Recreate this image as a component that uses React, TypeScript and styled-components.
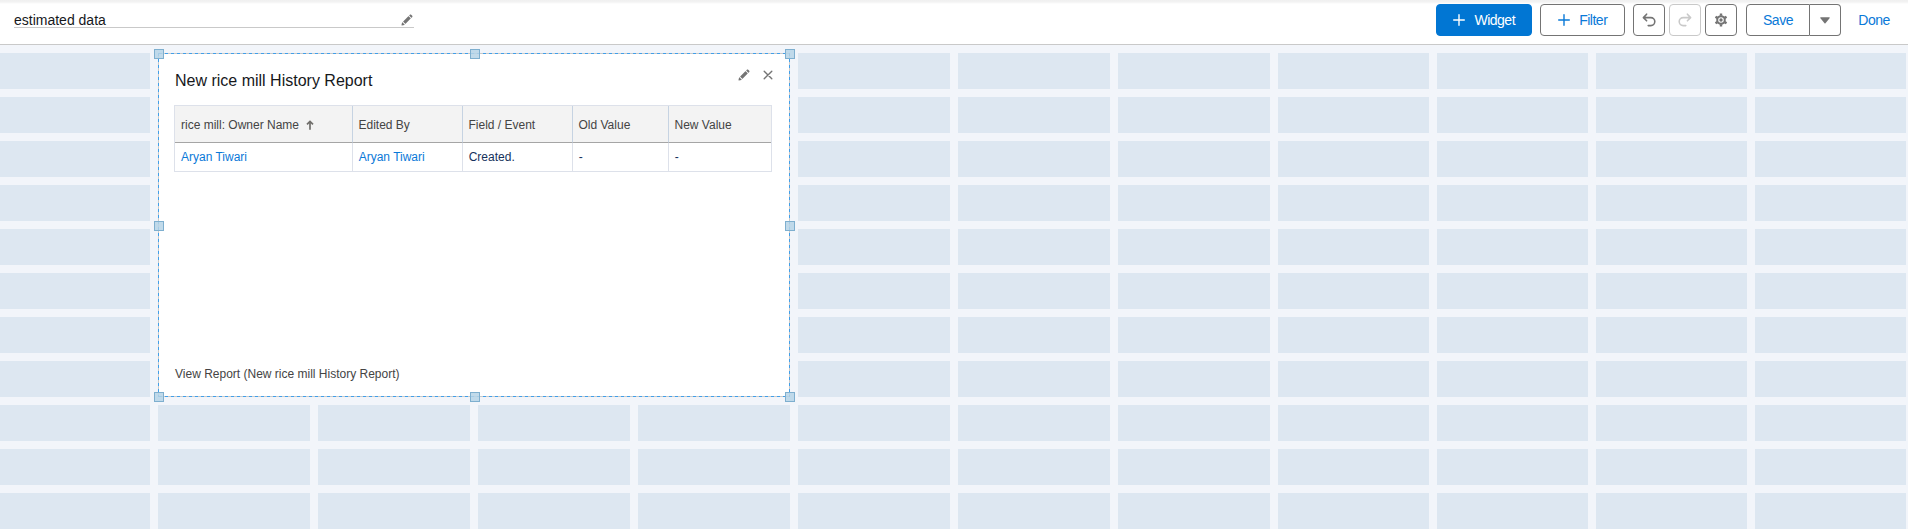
import React from "react";
import styled, { createGlobalStyle, css } from "styled-components";

const Global = createGlobalStyle`
  * { box-sizing: border-box; }
  body { margin: 0; background: #f2f5fa; overflow: hidden; font-family: "Liberation Sans", Arial, sans-serif; color: #16181b; }
  button { font: inherit; margin: 0; cursor: pointer; }
`;

const Page = styled.div`
  height: 529px;
  overflow: hidden;
  display: flex;
  flex-direction: column;
`;

const Toolbar = styled.header`
  height: 45px;
  flex: none;
  display: flex;
  justify-content: space-between;
  align-items: flex-start;
  padding: 4px 10px 0 14px;
  background: linear-gradient(#f0f0f0 0, #f3f3f3 2px, #fff 4px);
  border-bottom: 1px solid #c9c9c9;
`;

const NameField = styled.div`
  width: 400px;
  height: 24px;
  display: flex;
  justify-content: space-between;
  align-items: flex-start;
  padding: 7px 1px 0 0;
  border-bottom: 1px solid #c9c9c9;
  font-size: 14px;
  line-height: 18px;
  svg { margin-top: 3px; }
`;

const Actions = styled.div`
  display: flex;
`;

const Button = styled.button<{ $kind?: "brand" | "plain"; $w: number; $gap?: number; $off?: boolean }>`
  width: ${(p) => p.$w}px;
  height: 32px;
  margin-left: ${(p) => p.$gap ?? 0}px;
  padding: 0;
  display: flex;
  align-items: center;
  justify-content: center;
  gap: 9.5px;
  border: 1px solid ${(p) => (p.$off ? "#c9c9c9" : "#747474")};
  border-radius: 4px;
  background: #fff;
  color: #0a79d8;
  font-size: 14px;
  letter-spacing: -0.5px;
  line-height: 30px;
  ${(p) => p.$kind === "brand" && css`background: #0176d3; border-color: #0176d3; color: #fff;`}
  ${(p) => p.$kind === "plain" && css`background: transparent; border-color: transparent;`}
`;

const SplitButton = styled.div`
  display: flex;
  margin-left: 9px;
  ${Button}:first-child { border-radius: 4px 0 0 4px; }
  ${Button}:last-child { border-radius: 0 4px 4px 0; border-left: 0; }
`;

const Canvas = styled.main`
  flex: none;
  display: grid;
  grid-template-columns: 150px repeat(7, 152px) repeat(4, 151px);
  grid-auto-rows: 36px;
  gap: 8px;
  padding-top: 8px;
`;

const Cell = styled.div`
  background: #dde7f1;
`;

const dash = "#419fe9 0 3px, #c9c9c9 3px 6px";

const Widget = styled.section`
  grid-column: 2 / span 4;
  grid-row: 1 / span 8;
  position: relative;
  display: flex;
  flex-direction: column;
  padding: 16px 18px 15px 16px;
  background:
    repeating-linear-gradient(90deg, ${dash}) 1px 0 / 632px 1px repeat-x,
    repeating-linear-gradient(90deg, ${dash}) 1px 100% / 632px 1px repeat-x,
    repeating-linear-gradient(${dash}) left / 1px 100% no-repeat,
    repeating-linear-gradient(${dash}) right / 1px 100% no-repeat,
    #fff;
`;

const Handle = styled.span<{ $x: number; $y: number }>`
  position: absolute;
  left: calc(${(p) => p.$x}% - ${(p) => (p.$x === 100 ? 5 : 4)}px);
  top: calc(${(p) => p.$y}% - ${(p) => (p.$y === 100 ? 5 : 4)}px);
  width: 10px;
  height: 10px;
  background: rgba(182, 212, 230, 0.85);
  border: 1px solid #7eafcf;
`;

const WidgetHead = styled.div`
  display: flex;
  justify-content: space-between;
  height: 36px;
`;

const Title = styled.h2`
  margin: 0;
  padding-left: 1px;
  font-size: 16px;
  font-weight: 400;
  line-height: 24px;
`;

const HeadIcons = styled.div`
  display: flex;
  align-items: flex-start;
  gap: 13px;
  margin-right: -1px;
`;

const Table = styled.div`
  display: grid;
  grid-template-columns: 178px 110px 110px 96px 102px;
  border: 1px solid #dde1ea;
  font-size: 12px;
`;

const HeadCell = styled.div`
  height: 37px;
  display: flex;
  align-items: center;
  gap: 7px;
  padding: 2px 0 0 5.5px;
  background: #f3f3f3;
  border-bottom: 1px solid #a5a5a5;
  border-right: 1px solid #c6d3e2;
  color: #444;
  &:first-child { padding-left: 6px; }
  &:nth-child(5) { border-right: 0; }
`;

const BodyCell = styled.div<{ $link?: boolean }>`
  height: 28px;
  line-height: 28px;
  padding-left: 5.7px;
  border-right: 1px solid #dde1ea;
  color: ${(p) => (p.$link ? "#0a79d8" : "#16325c")};
  &:nth-child(6) { padding-left: 6px; }
  &:last-child { border-right: 0; }
`;

const Footer = styled.a`
  margin-top: auto;
  padding-left: 1px;
  font-size: 12px;
  line-height: 16px;
  color: #444;
`;

const Pencil = () => (
  <svg width="12" height="12" viewBox="0 0 52 52" fill="#747474">
    <path d="M9.5 33.4l8.9 8.9c.4.4 1 .4 1.4 0L42 20c.4-.4.4-1 0-1.4l-8.8-8.8c-.4-.4-1-.4-1.4 0L9.5 32.1c-.4.4-.4 1 0 1.3zM36.1 5.7c-.4.4-.4 1 0 1.4l8.8 8.8c.4.4 1 .4 1.4 0l2.5-2.5c1.6-1.5 1.6-3.9 0-5.5l-4.7-4.7c-1.6-1.6-4.1-1.6-5.7 0l-2.3 2.5zM2.1 48.2c-.2 1 .7 1.9 1.7 1.7l10.9-2.6c.4-.1.7-.3.9-.5l.2-.2c.2-.2.3-.9-.1-1.3l-9-9c-.4-.4-1.1-.3-1.3-.1l-.2.2c-.3.3-.4.6-.5.9L2.1 48.2z" />
  </svg>
);

const Plus = () => (
  <svg width="12" height="12" viewBox="0 0 12 12" fill="none" stroke="currentColor" strokeWidth="1.4" strokeLinecap="round">
    <path d="M6 .7v10.6M.7 6h10.6" />
  </svg>
);

const Close = () => (
  <svg width="10" height="12" viewBox="0 0 10 12" fill="none" stroke="#747474" strokeWidth="1.4" strokeLinecap="round">
    <path d="M1.2 2.2l7.6 7.6M8.8 2.2L1.2 9.8" />
  </svg>
);

const Turn = ({ redo }: { redo?: boolean }) => (
  <svg width="14" height="14" viewBox="0 0 14 14" fill="none" stroke={redo ? "#c9c9c9" : "#747474"} strokeWidth="1.6" strokeLinecap="round" strokeLinejoin="round">
    <path transform={redo ? "matrix(-1 0 0 1 14 0)" : undefined} d="M4.6 1.2L1.4 4.6l3.2 3.2M1.6 4.6h7.2a4 4 0 0 1 0 8H6.2" />
  </svg>
);

const Gear = () => (
  <svg width="14" height="14" viewBox="0 0 14 14" fill="none" stroke="#747474">
    <circle cx="7" cy="7" r="3.8" strokeWidth="2" />
    <circle cx="7" cy="7" r="1.7" fill="#747474" stroke="none" />
    <path strokeWidth="2.4" d="M7 .6v2.2M7 11.2v2.2M1.46 3.8l1.9 1.1M10.64 9.1l1.9 1.1M1.46 10.2l1.9-1.1M10.64 4.9l1.9-1.1" />
  </svg>
);

const Caret = () => (
  <svg width="10" height="7" viewBox="0 0 11 7" fill="#747474">
    <path d="M1 0h9c.6 0 .9.6.5 1.1L6 6.6c-.3.3-.7.3-1 0L.5 1.1C.1.6.4 0 1 0z" />
  </svg>
);

const SortArrow = () => (
  <svg width="8" height="10" viewBox="0 0 8 10" fill="none" stroke="#706e6b" strokeWidth="1.7">
    <path d="M4 9.7V1.4M1 4.4l3-3 3 3" />
  </svg>
);

const handles: [number, number][] = [[0, 0], [50, 0], [100, 0], [0, 50], [100, 50], [0, 100], [50, 100], [100, 100]];
const columns = ["rice mill: Owner Name", "Edited By", "Field / Event", "Old Value", "New Value"];
const record = ["Aryan Tiwari", "Aryan Tiwari", "Created.", "-", "-"];

export default function App() {
  return (
    <Page>
      <Global />
      <Toolbar>
        <NameField>estimated data<Pencil /></NameField>
        <Actions>
          <Button $kind="brand" $w={96}><Plus />Widget</Button>
          <Button $w={85} $gap={8}><Plus />Filter</Button>
          <Button $w={32} $gap={8} aria-label="Undo"><Turn /></Button>
          <Button $w={32} $gap={4} $off aria-label="Redo"><Turn redo /></Button>
          <Button $w={32} $gap={4} aria-label="Settings"><Gear /></Button>
          <SplitButton>
            <Button $w={64}>Save</Button>
            <Button $w={31} aria-label="More save options"><Caret /></Button>
          </SplitButton>
          <Button $kind="plain" $w={48} $gap={9}>Done</Button>
        </Actions>
      </Toolbar>
      <Canvas>
        <Widget>
          <WidgetHead>
            <Title>New rice mill History Report</Title>
            <HeadIcons><Pencil /><Close /></HeadIcons>
          </WidgetHead>
          <Table>
            {columns.map((name, i) => (
              <HeadCell key={name}>{name}{i === 0 && <SortArrow />}</HeadCell>
            ))}
            {record.map((value, i) => (
              <BodyCell key={i} $link={i < 2}>{value}</BodyCell>
            ))}
          </Table>
          <Footer>View Report (New rice mill History Report)</Footer>
          {handles.map(([x, y]) => <Handle key={`${x}-${y}`} $x={x} $y={y} />)}
        </Widget>
        {Array.from({ length: 8 * 8 + 3 * 12 }, (_, i) => <Cell key={i} />)}
      </Canvas>
    </Page>
  );
}
